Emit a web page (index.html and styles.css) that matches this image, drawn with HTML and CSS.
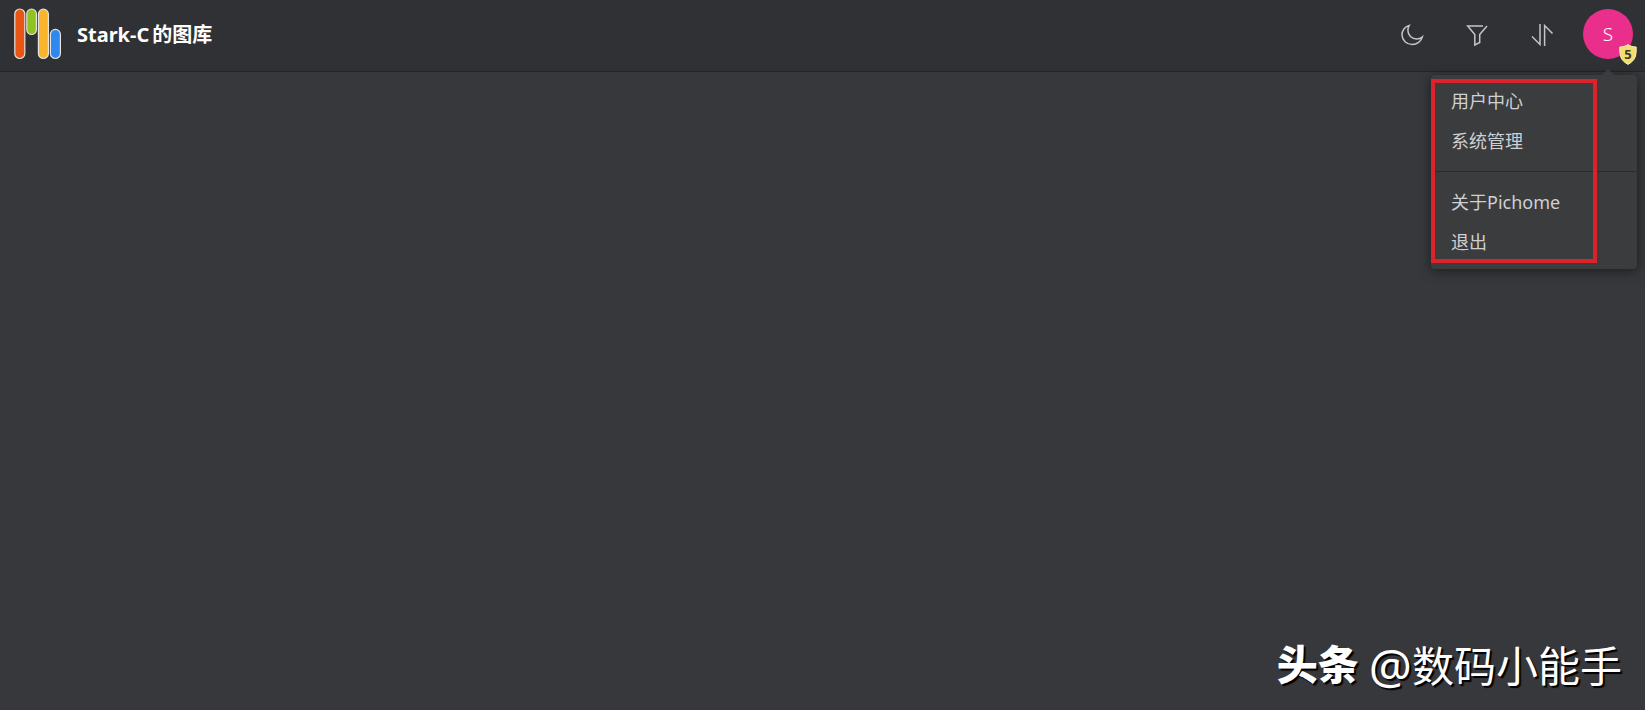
FILE: index.html
```html
<!DOCTYPE html>
<html lang="zh-CN">
<head>
<meta charset="utf-8">
<title>Stark-C的图库</title>
<link rel="stylesheet" href="styles.css">
</head>
<body>
<header class="topbar">
  <a class="brand" href="#">
    <svg class="logo" viewBox="0 0 48 52" aria-hidden="true">
      <g stroke="#e6e2dc" stroke-width="1.2">
        <rect x="0.8" y="1" width="10" height="49.5" rx="5" fill="#e95513"/>
        <rect x="12.8" y="1" width="9.6" height="25.5" rx="4.8" fill="#8fc31f"/>
        <rect x="24.4" y="1.2" width="10" height="49.3" rx="5" fill="#f9b52b"/>
        <rect x="36.4" y="21.4" width="10" height="29.1" rx="5" fill="#2f88f0"/>
      </g>
    </svg>
    <span class="brand-name"><span>Stark-C</span><span>的图库</span></span>
  </a>
  <nav class="tools">
    <button class="tool" type="button" aria-label="深色模式">
      <svg class="icon" viewBox="0 0 24 24"><path d="M9.2 2.4C4.8 3.6 1.9 7.6 2 12c.2 5.4 4.6 9.6 10.2 9.6 4.8 0 8.9-3.2 10.1-7.6-1.5 1.3-3.5 2-5.5 2-5 0-8.9-3.8-8.9-8.5 0-1.8.4-3.6 1.3-5.1z"/></svg>
    </button>
    <button class="tool" type="button" aria-label="筛选">
      <svg class="icon" viewBox="0 0 24 24"><path d="M18 3H2.7L9.8 11.5V22L14.7 19.5V11.5L22 3"/></svg>
    </button>
    <button class="tool" type="button" aria-label="排序">
      <svg class="icon" viewBox="0 0 24 24"><path d="M10 1V21.500L2 13.500M14.600 23V2.500L22.500 10.500"/></svg>
    </button>
    <div class="account">
      <button class="avatar" type="button" aria-haspopup="menu" aria-expanded="true">S</button>
      <span class="badge">
        <svg class="shield" viewBox="0 0 18 21" aria-hidden="true"><path d="M9 .6C7 2 4 3 .8 3 .7 11 1 16 9 20.400 17 16 17.300 11 17.200 3 14 3 11 2 9 .6z" fill="#f3de72" stroke="#fff3ae"/></svg>
        <span class="level">5</span>
      </span>
      <div class="menu">
        <div class="menu-body">
          <a class="item" href="#">用户中心</a>
          <a class="item" href="#">系统管理</a>
          <hr class="divider">
          <a class="item" href="#">关于Pichome</a>
          <a class="item" href="#">退出</a>
        </div>
        <div class="highlight"></div>
      </div>
    </div>
  </nav>
</header>
<main class="content"></main>
<footer class="watermark"><strong class="source">头条</strong><span class="author"><span class="at">@</span><span>数码小能手</span></span></footer>
</body>
</html>
```
FILE: styles.css
```css
* {
  box-sizing: border-box;
}

body {
  margin: 0;
  min-height: 100vh;
  display: flex;
  flex-direction: column;
  background: #37383b;
  color: #cfd0d2;
  font-family: "Noto Sans", "Noto Sans CJK SC", sans-serif;
}

.topbar {
  display: flex;
  align-items: center;
  justify-content: space-between;
  height: 72px;
  padding: 0 12px 3px 14px;
  background: #303134;
  border-bottom: 1px solid #242527;
}

.brand {
  display: flex;
  align-items: center;
  gap: 15px;
  color: #fff;
  text-decoration: none;
}

.logo {
  width: 48px;
  height: 52px;
}

.brand-name {
  display: flex;
  gap: 3px;
  padding-top: 2px;
  font-size: 20px;
  font-weight: 700;
  line-height: 28px;
}

.tools {
  display: flex;
  align-items: center;
}

.tool {
  display: flex;
  align-items: center;
  justify-content: center;
  width: 65px;
  height: 50px;
  padding: 2px 0 0;
  border: 0;
  background: none;
  color: #c4c5c7;
}

.icon {
  width: 24px;
  height: 24px;
  fill: none;
  stroke: currentColor;
  stroke-width: 1.5;
}

.account {
  position: relative;
  margin-left: 9px;
}

.avatar {
  display: block;
  width: 50px;
  height: 50px;
  padding: 0;
  border: 0;
  border-radius: 50%;
  background: #ea2e8b;
  color: #fff;
  font-family: inherit;
  font-size: 19px;
  font-weight: 300;
}

.badge {
  position: absolute;
  right: -4px;
  bottom: -6px;
  display: grid;
  width: 18px;
  height: 21px;
}

.shield,
.level {
  grid-area: 1 / 1;
}

.level {
  color: #3f3a20;
  font-size: 13px;
  font-weight: 700;
  line-height: 20px;
  text-align: center;
}

.menu {
  position: absolute;
  top: 66px;
  right: -4px;
  width: 206px;
  border-radius: 4px;
  background: #3b3c3e;
  box-shadow: 0 2px 12px rgba(0, 0, 0, 0.5);
}

.menu::before {
  content: "";
  position: absolute;
  top: -6px;
  right: 23px;
  border: 6px solid transparent;
  border-top: 0;
  border-bottom-color: #3b3c3e;
}

.menu-body {
  padding: 6px 0 7px;
}

.item {
  display: block;
  padding: 0 20px;
  color: #cfd0d2;
  font-size: 18px;
  line-height: 40px;
  text-decoration: none;
}

.divider {
  height: 1px;
  margin: 10px 0;
  border: 0;
  background: #2a2b2d;
}

.highlight {
  position: absolute;
  inset: 4px 40px 6px 0;
  border: 4px solid #dc232b;
  pointer-events: none;
}

.content {
  flex: 1;
}

.watermark {
  display: flex;
  align-items: flex-start;
  justify-content: flex-end;
  gap: 10px;
  padding: 0 23px 14px 0;
  color: #fff;
  font-size: 42px;
  line-height: 60px;
  text-shadow: 2px 2px 1px #000;
}

.source {
  font-size: 41px;
  font-weight: 900;
  line-height: 56px;
}

.author {
  display: flex;
}

.at {
  font-size: 48px;
}
```
